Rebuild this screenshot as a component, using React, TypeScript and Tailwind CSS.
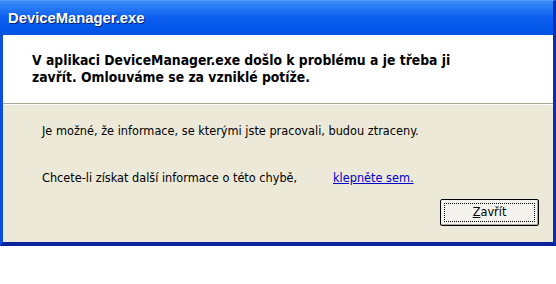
export default function App() {
  return (
    <div className="w-[556px] h-[284px] bg-white" style={{ fontFamily: 'Tahoma, "DejaVu Sans Condensed", "Liberation Sans", sans-serif' }}>
      <div className="w-[556px] flex flex-col">
        {/* title bar */}
        <div className="h-[35px] flex items-center pl-[8px] bg-gradient-to-b from-[#3a8cf8] via-[#0a5df0] to-[#0053e4] border-t border-[#4f9bff] border-r-[3px] border-r-[#0030b8]">
          <span className="text-white font-bold text-[14.8px] leading-none [text-shadow:1px_1px_0_#0a1f6e]" style={{ fontFamily: '"Trebuchet MS", "Liberation Sans", sans-serif' }}>
            DeviceManager.exe
          </span>
        </div>
        <div className="flex flex-col border-l-[3px] border-l-[#0b4fdc] border-r-[3px] border-r-[#0a2fa8] border-b-[4px] border-b-[#0a239a]">
          {/* header */}
          <div className="h-[69px] bg-white pl-[29px] pt-[17px] border-b border-b-[#aca899]">
            <p className="text-[13.8px] font-bold leading-[17px] text-black whitespace-nowrap">
              V aplikaci DeviceManager.exe došlo k problému a je třeba ji
              <br />
              zavřít. Omlouváme se za vzniklé potíže.
            </p>
          </div>
          {/* body */}
          <div className="h-[138px] bg-[#ece9d8] border-t border-t-white pl-[39px] pt-[18px] text-[12.6px] text-black">
            <p className="leading-[15px]">Je možné, že informace, se kterými jste pracovali, budou ztraceny.</p>
            <div className="flex mt-[32px] leading-[15px]">
              <span className="w-[291px]">Chcete-li získat další informace o této chybě,</span>
              <a href="#" className="text-[#0000cc] underline">klepněte sem.</a>
            </div>
            <div className="flex justify-end pr-[14px] mt-[14px]">
              <button className="w-[99px] h-[27px] border border-black bg-[#f4f3ee] rounded-[2px] p-[3px] shadow-[inset_-1px_-1px_0_#aca899]">
                <span className="flex items-center justify-center w-full h-full border border-dotted border-black text-[12.6px]">
                  <span className="underline">Z</span>avřít
                </span>
              </button>
            </div>
          </div>
        </div>
      </div>
    </div>
  );
}
